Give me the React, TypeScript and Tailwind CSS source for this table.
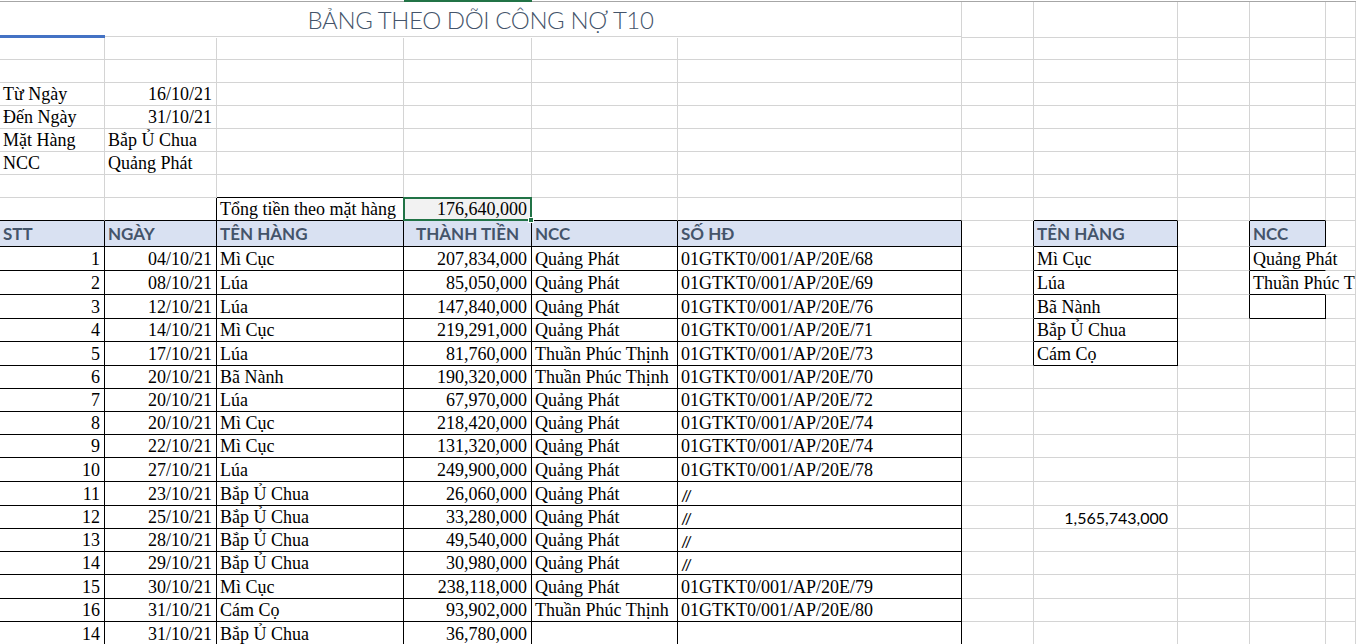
import React from "react";

type Edge = "g" | "k" | "n";

interface CellSpec {
  t?: string;
  a?: "l" | "r" | "c";
  f?: "serif" | "sans" | "head";
  r?: Edge;
  b?: Edge;
  span?: string;
  bg?: string;
  pad?: string;
  sel?: boolean;
  title?: boolean;
}

const RIGHT: Record<Edge, string> = {
  g: "border-r-[#d4d4d4]",
  k: "border-r-black",
  n: "border-r-transparent",
};
const BOTTOM: Record<Edge, string> = {
  g: "border-b-[#d4d4d4]",
  k: "border-b-black",
  n: "border-b-transparent",
};
const FONT = {
  serif: "font-['Liberation_Serif','Times_New_Roman',serif] text-[18px] leading-[21px] text-black items-end",
  sans: "font-['Lato',sans-serif] text-[16px] leading-[21px] text-black items-end",
  head: "font-['Lato',sans-serif] font-bold text-[17px] leading-[21px] text-[#44546a] items-center",
};
const ALIGN = {
  l: "justify-start pl-[3px]",
  r: "justify-end pr-[4px]",
  c: "justify-center",
};

const COLS =
  "grid grid-cols-[105px_112px_187px_128px_146px_284px_72px_144px_72px_76px_1fr]";

// 11 columns: A..K
const blank = (): CellSpec[] => Array.from({ length: 11 }, () => ({}));

const withCells = (over: Record<number, CellSpec>) => {
  const cells = blank();
  Object.entries(over).forEach(([k, v]) => {
    cells[Number(k)] = { ...cells[Number(k)], ...v };
  });
  return cells;
};

const items: string[][] = [
  ["1", "04/10/21", "Mì Cục", "207,834,000", "Quảng Phát", "01GTKT0/001/AP/20E/68"],
  ["2", "08/10/21", "Lúa", "85,050,000", "Quảng Phát", "01GTKT0/001/AP/20E/69"],
  ["3", "12/10/21", "Lúa", "147,840,000", "Quảng Phát", "01GTKT0/001/AP/20E/76"],
  ["4", "14/10/21", "Mì Cục", "219,291,000", "Quảng Phát", "01GTKT0/001/AP/20E/71"],
  ["5", "17/10/21", "Lúa", "81,760,000", "Thuần Phúc Thịnh", "01GTKT0/001/AP/20E/73"],
  ["6", "20/10/21", "Bã Nành", "190,320,000", "Thuần Phúc Thịnh", "01GTKT0/001/AP/20E/70"],
  ["7", "20/10/21", "Lúa", "67,970,000", "Quảng Phát", "01GTKT0/001/AP/20E/72"],
  ["8", "20/10/21", "Mì Cục", "218,420,000", "Quảng Phát", "01GTKT0/001/AP/20E/74"],
  ["9", "22/10/21", "Mì Cục", "131,320,000", "Quảng Phát", "01GTKT0/001/AP/20E/74"],
  ["10", "27/10/21", "Lúa", "249,900,000", "Quảng Phát", "01GTKT0/001/AP/20E/78"],
  ["11", "23/10/21", "Bắp Ủ Chua", "26,060,000", "Quảng Phát", "//"],
  ["12", "25/10/21", "Bắp Ủ Chua", "33,280,000", "Quảng Phát", "//"],
  ["13", "28/10/21", "Bắp Ủ Chua", "49,540,000", "Quảng Phát", "//"],
  ["14", "29/10/21", "Bắp Ủ Chua", "30,980,000", "Quảng Phát", "//"],
  ["15", "30/10/21", "Mì Cục", "238,118,000", "Quảng Phát", "01GTKT0/001/AP/20E/79"],
  ["16", "31/10/21", "Cám Cọ", "93,902,000", "Thuần Phúc Thịnh", "01GTKT0/001/AP/20E/80"],
  ["14", "31/10/21", "Bắp Ủ Chua", "36,780,000", "", ""],
];

const rowHeights = [
  "h-[24px]", "h-[24px]", "h-[24px]", "h-[23px]", "h-[24px]", "h-[23px]",
  "h-[23px]", "h-[23px]", "h-[23px]", "h-[24px]", "h-[24px]", "h-[23px]",
  "h-[23px]", "h-[23px]", "h-[24px]", "h-[23px]", "h-[24px]",
];

const products = ["Mì Cục", "Lúa", "Bã Nành", "Bắp Ủ Chua", "Cám Cọ"];
const suppliers = ["Quảng Phát", "Thuần Phúc Thịnh", ""];

const headCell: CellSpec = { f: "head", a: "l", r: "k", b: "k", bg: "bg-[#d9e1f2]" };

const buildRows = () => {
  const rows: { h: string; cells: CellSpec[] }[] = [];

  // title row: A..F merged
  const title = withCells({});
  title.splice(0, 6, { title: true, t: "BẢNG THEO DÕI CÔNG NỢ T10", span: "col-span-6", b: "n", r: "g" });
  rows.push({ h: "h-[36px]", cells: title });
  rows.push({ h: "h-[22px]", cells: blank() });
  rows.push({ h: "h-[23px]", cells: blank() });

  const info = [
    ["Từ Ngày", "16/10/21", "r"],
    ["Đến Ngày", "31/10/21", "r"],
    ["Mặt Hàng", "Bắp Ủ Chua", "l"],
    ["NCC", "Quảng Phát", "l"],
  ];
  info.forEach(([k, v, a]) =>
    rows.push({
      h: "h-[23px]",
      cells: withCells({
        0: { t: k, f: "serif", a: "l" },
        1: { t: v, f: "serif", a: a as "l" | "r" },
      }),
    })
  );

  rows.push({ h: "h-[23px]", cells: withCells({ 2: { b: "k" }, 3: { b: "k" } }) });

  rows.push({
    h: "h-[23px]",
    cells: withCells({
      0: { b: "k" },
      1: { b: "k", r: "k" },
      2: { t: "Tổng tiền theo mặt hàng", f: "serif", a: "l", r: "k", b: "k" },
      3: { t: "176,640,000", f: "serif", a: "r", r: "k", b: "k", bg: "bg-[#f2f2f2]", sel: true },
      4: { b: "k" },
      5: { b: "k" },
      7: { b: "k" },
      9: { b: "k" },
    }),
  });

  rows.push({
    h: "h-[26px]",
    cells: withCells({
      0: { ...headCell, t: "STT" },
      1: { ...headCell, t: "NGÀY" },
      2: { ...headCell, t: "TÊN HÀNG" },
      3: { ...headCell, t: "THÀNH TIỀN", a: "c" },
      4: { ...headCell, t: "NCC" },
      5: { ...headCell, t: "SỐ HĐ" },
      6: { r: "k" },
      7: { ...headCell, t: "TÊN HÀNG" },
      8: { r: "k" },
      9: { ...headCell, t: "NCC" },
    }),
  });

  items.forEach((it, i) => {
    const over: Record<number, CellSpec> = {
      0: { t: it[0], f: "serif", a: "r", r: "k", b: "k" },
      1: { t: it[1], f: "serif", a: "r", r: "k", b: "k" },
      2: { t: it[2], f: "serif", a: "l", r: "k", b: "k" },
      3: { t: it[3], f: "serif", a: "r", r: "k", b: "k" },
      4: { t: it[4], f: "serif", a: "l", r: "k", b: "k" },
      5: { t: it[5], f: it[5] === "//" ? "sans" : "serif", a: "l", r: "k", b: "k" },
    };
    if (i < products.length) {
      over[6] = { r: "k" };
      over[7] = { t: products[i], f: "serif", a: "l", r: "k", b: "k" };
    }
    if (i < suppliers.length) {
      over[8] = { r: "k" };
      over[9] = suppliers[i]
        ? { t: suppliers[i], f: "serif", a: "l", r: "n", b: "k" }
        : { r: "k", b: "k" };
    }
    if (i === 11) {
      over[7] = { t: "1,565,743,000", f: "sans", a: "r", pad: "pr-[9px]" };
    }
    rows.push({ h: rowHeights[i], cells: withCells(over) });
  });

  return rows;
};

const Cell: React.FC<{ c: CellSpec }> = ({ c }) => {
  if (c.title) {
    return (
      <div className={`${c.span} flex flex-col border-r ${RIGHT[c.r ?? "g"]}`}>
        <div className="flex flex-1 items-center justify-center pt-[2px] font-['Lato',sans-serif] text-[24px] font-light leading-none tracking-[-0.4px] text-[#44546a]">
          {c.t}
        </div>
        <div className="flex h-[3px] items-center">
          <div className="h-[3px] w-[105px] bg-[#4472c4]" />
          <div className="h-px flex-1 bg-[#d4d4d4]" />
        </div>
      </div>
    );
  }
  const font = FONT[c.f ?? "serif"];
  const align = c.pad ? `justify-end ${c.pad}` : ALIGN[c.a ?? "l"];
  return (
    <div
      className={`relative flex whitespace-nowrap border-r border-b ${RIGHT[c.r ?? "g"]} ${
        BOTTOM[c.b ?? "g"]
      } ${c.bg ?? ""} ${font} ${align}`}
    >
      {c.t}
      {c.sel && (
        <div className="pointer-events-none absolute -top-px -left-px -right-px -bottom-px z-10 border-2 border-[#217346]">
          <div className="absolute -right-[4px] -bottom-[4px] h-[6px] w-[6px] border border-white bg-[#217346]" />
        </div>
      )}
    </div>
  );
};

export default function App() {
  const rows = buildRows();
  return (
    <div className="h-[644px] w-[1356px] overflow-hidden bg-white">
      <div className={`${COLS} h-[2px]`}>
        <div className="border-b border-[#a6a6a6]" />
        <div className="border-b border-[#a6a6a6]" />
        <div className="border-b border-[#a6a6a6]" />
        <div className="bg-[#217346]" />
        <div className="border-b border-[#a6a6a6]" />
        <div className="border-b border-[#a6a6a6]" />
        <div className="border-b border-[#a6a6a6]" />
        <div className="border-b border-[#a6a6a6]" />
        <div className="border-b border-[#a6a6a6]" />
        <div className="border-b border-[#a6a6a6]" />
        <div className="border-b border-[#a6a6a6]" />
      </div>
      {rows.map((row, i) => (
        <div key={i} className={`${COLS} ${row.h}`}>
          {row.cells.map((c, j) => (
            <Cell key={j} c={c} />
          ))}
        </div>
      ))}
    </div>
  );
}
